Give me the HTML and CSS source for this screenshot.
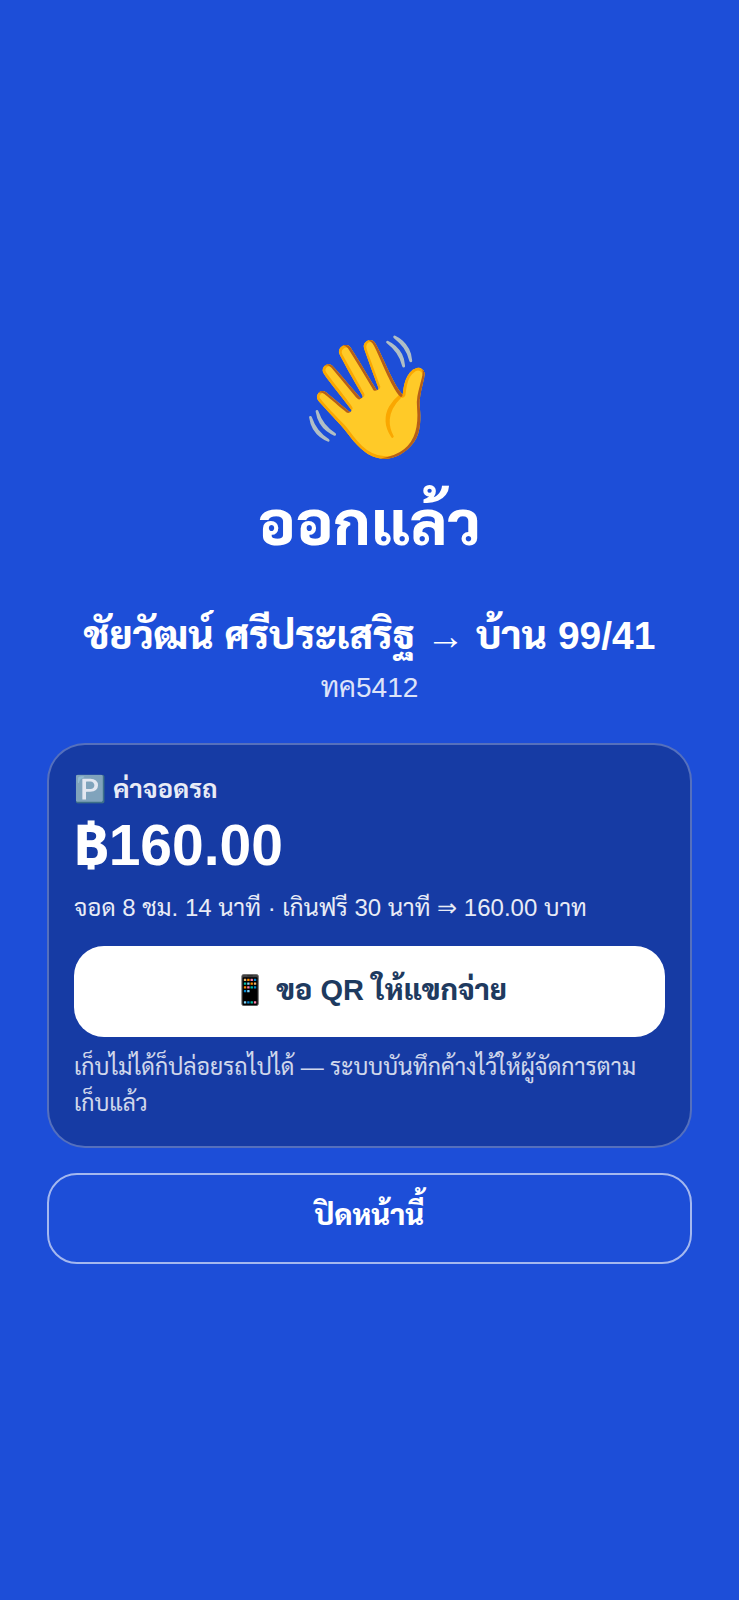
FILE: index.html
```html
<!DOCTYPE html>
<html lang="th">
<head>
    <meta charset="UTF-8">
    <meta name="viewport" content="width=device-width, initial-scale=1">
    <title>ออกแล้ว</title>
    <link rel="stylesheet" href="styles.css">
</head>
<body>
    <main class="screen">
        <div class="wave">👋</div>
        <h1>ออกแล้ว</h1>
        <p class="visitor">ชัยวัฒน์ ศรีประเสริฐ → บ้าน 99/41</p>
        <p class="plate">ทค5412</p>

        <!-- ค่าจอดรถ -->
        <section class="fee-card">
            <h2>🅿️ ค่าจอดรถ</h2>
            <div class="amount">฿160.00</div>
            <p class="detail">จอด 8 ชม. 14 นาที · เกินฟรี 30 นาที ⇒ 160.00 บาท</p>
            <button type="button" class="btn btn-qr">📱 ขอ QR ให้แขกจ่าย</button>
            <p class="note">เก็บไม่ได้ก็ปล่อยรถไปได้ — ระบบบันทึกค้างไว้ให้ผู้จัดการตามเก็บแล้ว</p>
        </section>

        <button type="button" class="btn btn-close">ปิดหน้านี้</button>
    </main>
</body>
</html>
```

FILE: styles.css
```css
* {
    box-sizing: border-box;
}

body {
    margin: 0;
    font-family: "Liberation Sans", "Sarabun", sans-serif;
    background: #1d4ed8;
    color: #fff;
}

h1, h2, p {
    margin: 0;
}

.screen {
    min-height: 100vh;
    padding: 47px;
    display: flex;
    flex-direction: column;
    justify-content: center;
    text-align: center;
}

.wave {
    font-size: 119px;
    line-height: 124px;
}

h1 {
    margin-top: 24px;
    font-size: 62px;
    line-height: 80px;
    font-weight: 800;
}

.visitor {
    margin-top: 44px;
    font-size: 39px;
    line-height: 56px;
    font-weight: 800;
}

.plate {
    font-size: 28px;
    line-height: 40px;
    margin-top: 4px;
    opacity: 0.85;
}

.fee-card {
    margin-top: 35px;
    padding: 25px;
    border: 2px solid rgba(255, 255, 255, 0.27);
    border-radius: 38px;
    background: rgba(0, 0, 0, 0.24);
    text-align: left;
}

.fee-card h2 {
    font-size: 26px;
    line-height: 38px;
    opacity: 0.9;
}

.amount {
    font-size: 57px;
    line-height: 74px;
    font-weight: 800;
}

.detail {
    font-size: 24px;
    line-height: 36px;
    margin-top: 8px;
    opacity: 0.9;
}

.note {
    font-size: 23px;
    line-height: 36px;
    margin-top: 12px;
    opacity: 0.8;
}

.btn {
    width: 100%;
    height: 91px;
    border-radius: 30px;
    font-family: inherit;
    font-size: 29px;
    font-weight: 800;
    cursor: pointer;
}

.btn-qr {
    margin-top: 20px;
    padding-bottom: 8px;
    border: none;
    background: #fff;
    color: #1e3a5f;
}

.btn-close {
    margin-top: 25px;
    padding-bottom: 12px;
    border: 2px solid rgba(255, 255, 255, 0.6);
    background: transparent;
    color: #fff;
}
```
